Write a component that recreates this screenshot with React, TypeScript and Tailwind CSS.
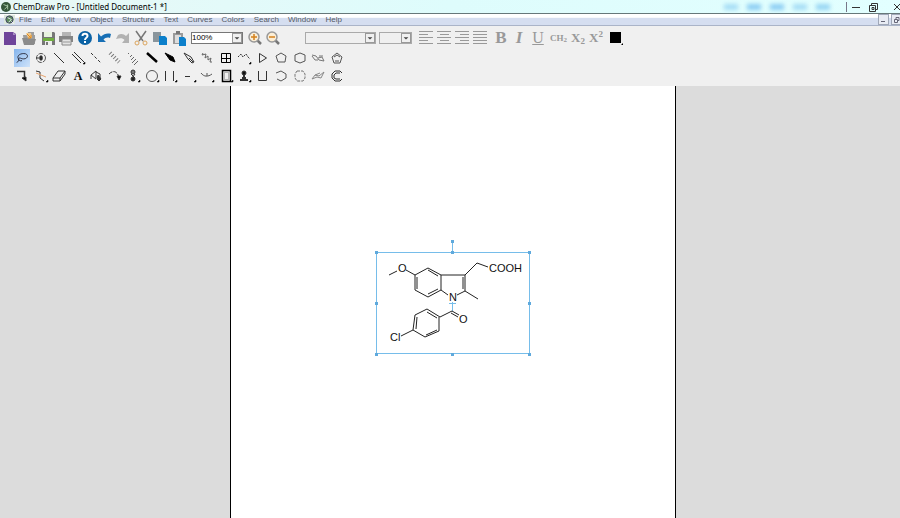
import React from 'react'

const menus = ['File', 'Edit', 'View', 'Object', 'Structure', 'Text', 'Curves', 'Colors', 'Search', 'Window', 'Help']

// main toolbar, drawn on a 16x16 grid
const actions = [
  { name: 'New', icon: <><path d="M2 2h9l3 2v11H2z" fill="#6f449a" /><path d="M11 2v3h3" fill="#a98cc4" /></> },
  { name: 'Open', icon: <><path d="M2 5h4l1-3h6v3h1v9H3z" fill="#9d9d9d" /><path d="M5 3h5l1 5H7z" fill="#f3c98b" /><path d="M6 4l4 4M10 5v3H7" stroke="#e08a1e" fill="none" /><path d="M1 8h5l1 1h8l-2 6H3z" fill="#8b8b8b" /></> },
  { name: 'Save', icon: <><path d="M2 2h12l1 1v12H2z" fill="#777" /><path d="M4 2h8v5H4z" fill="#e8f2df" /><path d="M3 8h11v3H3z" fill="#6fae3f" /><path d="M5 11h7v4H5z" fill="#eee" /><path d="M6 12h2v3H6z" fill="#777" /></> },
  { name: 'Print', icon: <><path d="M4 2h9v4H4z" fill="#b5b5b5" /><path d="M1 6h14v6H1z" fill="#858585" /><path d="M4 9h9v6H4z" fill="#e4e4e4" stroke="#888" /><path d="M5 12h7" stroke="#999" /></> },
  { name: 'Help', icon: <><circle cx="8" cy="8" r="7" fill="#0b62a5" /><path d="M5.500 6c0-3 5-3 5 0 0 2-2.500 1.500-2.500 4M8 11v2" stroke="#fff" strokeWidth="2" fill="none" /></> },
  { name: 'Undo', icon: <path d="M2 3v9h8L7.500 9.500C9 8 11 7 14 8l1-4C11 3 8 4 5 6.500z" fill="#176fb5" /> },
  { name: 'Redo', icon: <path d="M14 3v10H7l2.500-3C8 8 5 8 1 9l2-4c3-2 6-1 8 1z" fill="#b2b2b2" /> },
  { name: 'Cut', icon: <><path d="M3 1l7 10M13 1L6 11" stroke="#777" strokeWidth="1.500" /><circle cx="4" cy="13" r="2" stroke="#dba45c" fill="none" /><circle cx="12" cy="13" r="2" stroke="#dba45c" fill="none" /></> },
  { name: 'Copy', icon: <><path d="M1 2h8v10H1z" fill="#8a959c" /><path d="M7 6h6l2 2v7H7z" fill="#0c80cb" /></> },
  { name: 'Paste', icon: <><path d="M2 3h10v11H2z" fill="#9a9a9a" /><path d="M4 5h6v8H4z" fill="#ddd" /><path d="M5 1h4v3H5z" fill="#777" /><path d="M8 7h5l2 2v7H8z" fill="#0c80cb" /></> },
]

const corner = <path d="M14 15h2v-2z" fill="#000" stroke="#000" strokeWidth=".5" />

// drawing tools, 18x18 grid, 18 to a row
const tools = [
  { name: 'Lasso', icon: <path d="M3 14c2-1 3-2 2-4-2-3 1-6 6-6 6 0 5 6 0 6-3 0-3-1-5-1-2 1 0 4 3 3" stroke="#223" /> },
  { name: 'Structure Perspective', icon: <><circle cx="9" cy="9" r="4.500" stroke="#555" strokeDasharray="5 1" /><path d="M4 9h7" /><path d="M8 7h2v4H8z" fill="#222" /></> },
  { name: 'Solid Bond', icon: <path d="M4 4l10 10" /> },
  { name: 'Multiple Bonds', icon: <><path d="M3 5l9 9M5 3l10 10" />{corner}</> },
  { name: 'Dashed Bond', icon: <path d="M4 4l10 10" strokeDasharray="3 2" /> },
  { name: 'Hashed Bond', icon: <path d="M4 4l9 9" strokeWidth="4" strokeDasharray="1 2" stroke="#777" /> },
  { name: 'Hashed Wedged Bond', icon: <path d="M5 4L4 5M8 6L6 8M10 8l-3 3M12 10l-4 4M14 12l-4 4" stroke="#666" /> },
  { name: 'Bold Bond', icon: <path d="M4 4l10 9" strokeWidth="2.500" stroke="#000" /> },
  { name: 'Bold Wedged Bond', icon: <path d="M4 4l8 4 2 5-5-2z" fill="#000" stroke="#000" /> },
  { name: 'Hollow Wedged Bond', icon: <path d="M4 4l7 4 3 5-2 1-4-4zM9 9l4 4" /> },
  { name: 'Wavy Bond', icon: <path d="M5 4l-1 2 4-1-1 4 3-2v4l3-2-1 4h2" stroke="#666" /> },
  { name: 'Table', icon: <path d="M4.500 4.500h9v9h-9zM9.500 5v8M5 9.500h8" stroke="#000" /> },
  { name: 'Acyclic Chain', icon: <><path d="M3 8l3-3 2 3 3-3 2 3 2 2" strokeDasharray="2 1" />{corner}</> },
  { name: 'Cyclopropane Ring', icon: <path d="M5.500 4.500l7 4.500-7 4.500z" /> },
  { name: 'Cyclopentane Ring', icon: <path d="M4 7l5-3 5 3-1 6H6z" stroke="#555" /> },
  { name: 'Cyclohexane Ring', icon: <path d="M4 6l5-2 5 2v6l-5 2-5-2z" stroke="#555" /> },
  { name: 'Chair Ring', icon: <path d="M3 6l4 1 3 4 5 1-2-4-4 1M3 7l3 4h3M10 7h4" stroke="#777" /> },
  { name: 'Cyclopentadiene Ring', icon: <path d="M4 8l5-4 5 4-2 6H6zM6 8l3-2 3 2M7 12h4" stroke="#555" /> },
  { name: 'Marquee', icon: <><path d="M4 4.500h7.500V11" strokeWidth="1.500" /><path d="M9 11l4 3v-4z" fill="#000" /></> },
  { name: 'Bond Fragment', icon: <><path d="M4 4l4 1v6l4 3" /><path d="M4 6l10 4" stroke="#e7a46f" />{corner}</> },
  { name: 'Eraser', icon: <path d="M3 11l5-7h7l-5 7zM3 11v3h7v-3M10 14l5-7V4" /> },
  { name: 'Text', icon: <text x="9" y="13" textAnchor="middle" className="font-['Liberation_Serif'] text-[12px] font-bold" fill="#111" stroke="none">A</text> },
  { name: 'Pen', icon: <><path d="M4 12V8l5-4v7M4 8l5 4M9 5l4 2v5" /><path d="M11 8l3 4-2 2-2-2z" fill="#333" /></> },
  { name: 'Arrows', icon: <><path d="M3 7c4-4 8-3 10 3" strokeDasharray="4 1" /><path d="M11 9h4l-2 4z" fill="#000" /></> },
  { name: 'Orbitals', icon: <><circle cx="9" cy="5" r="2" fill="#777" /><circle cx="9" cy="12" r="2" fill="#222" /><path d="M7 7l4 4M11 7l-3 4" />{corner}</> },
  { name: 'Drawing Elements', icon: <><circle cx="9" cy="9" r="5.500" stroke="#555" />{corner}</> },
  { name: 'Brackets', icon: <><path d="M4.500 4v10M12.500 4v10" />{corner}</> },
  { name: 'Chemical Symbols', icon: <><path d="M5 9.500h5" />{corner}</> },
  { name: 'Query Tools', icon: <><path d="M3 6c3 4 7 4 11 1M9 6v3" stroke="#555" />{corner}</> },
  { name: 'TLC Plate', icon: <><path d="M5.500 3.500h8v11h-8z" stroke="#000" strokeWidth="1.500" /><path d="M7.500 5.500h4v7h-4z" stroke="#777" strokeDasharray="1 1" />{corner}</> },
  { name: 'Templates', icon: <><path d="M5 13h8M7 11h4M9 6v5" strokeWidth="2" /><circle cx="9" cy="6" r="2" fill="#111" />{corner}</> },
  { name: 'Cyclobutane Ring', icon: <path d="M4.500 4v9.500h8V4" /> },
  { name: 'Cyclohexane Ring 2', icon: <path d="M4 6l5-2 5 3v4l-5 3-4-2" stroke="#555" /> },
  { name: 'Cycloheptane Ring', icon: <path d="M6 4h6l2 3v4l-2 3H6l-2-3V7z" strokeDasharray="3 1" stroke="#777" /> },
  { name: 'Chair Ring 2', icon: <path d="M3 12l3-4 4 1 5-4-3 6-4-1zM6 8l5-2" stroke="#888" /> },
  { name: 'Benzene Ring', icon: <path d="M14 6l-2-2H7L4 7v4l3 3h5l2-2M12 6H8L6 8v3l2 1h4" /> },
]

const aligns = [
  { name: 'Align left', d: 'M0 .5h14M0 3.500h9M0 6.500h14M0 9.500h9M0 12.500h14' },
  { name: 'Center', d: 'M0 .5h14M3 3.500h9M0 6.500h14M3 9.500h9M0 12.500h14' },
  { name: 'Align right', d: 'M0 .5h14M5 3.500h9M0 6.500h14M5 9.500h9M0 12.500h14' },
  { name: 'Justify', d: 'M0 .5h14M0 3.500h14M0 6.500h14M0 9.500h14M0 12.500h14' },
]

const handles = [[376, 253], [452, 253], [529, 253], [376, 304], [529, 304], [376, 355], [452, 355], [529, 355], [452, 242]]

function Combo({ label, value, className }: { label: string; value?: string; className: string }) {
  return (
    <div className={'grid h-3 items-center border ' + className}>
      <select aria-label={label} className="col-start-1 row-start-1 h-full w-full appearance-none font-['Liberation_Sans'] text-[8px] leading-[10px] text-black">
        <option>{value}</option>
      </select>
      <svg viewBox="0 0 10 10" className="pointer-events-none col-start-1 row-start-1 size-[10px] justify-self-end border border-[#999] bg-[#f0f0f0]">
        <path d="M2 4h6L5 7z" fill="#444" />
      </svg>
    </div>
  )
}

function Zoom({ label, plus }: { label: string; plus?: boolean }) {
  return (
    <button aria-label={label} className="size-4">
      <svg viewBox="0 0 16 16" fill="none">
        <path d="M10 10l4 4" stroke="#777" strokeWidth="2.500" />
        <circle cx="7" cy="7" r="5" fill="#fbeed6" stroke="#999" strokeWidth="1.500" />
        <path d={plus ? 'M4 7h6M7 4v6' : 'M4 7h6'} stroke="#d4811c" strokeWidth="1.500" />
      </svg>
    </button>
  )
}

function TitleBar() {
  return (
    <header className="flex h-[14px] items-center border-b border-[#66787a] bg-linear-to-r from-[#e8f8f6] via-[#defcfc] to-[#e2ffff] pl-px">
      <svg viewBox="0 0 12 12" className="mr-[2px] size-[10px]">
        <circle cx="6" cy="6" r="6" fill="#35583a" />
        <path d="M3 3l5 2-4 4M8 3v6" stroke="#b9dcb8" fill="none" />
      </svg>
      <h1 className="font-['Noto_Sans',sans-serif] text-[8px] leading-3 whitespace-pre text-black">ChemDraw Pro - [Untitled Document-1 *]</h1>
      <div className="mr-4 ml-auto flex gap-[9px] blur-[2px]">
        <i className="h-[6px] w-[14px] bg-[#a5ddf5]" />
        <i className="h-[6px] w-[14px] bg-[#8bcdf3]" />
        <i className="h-[6px] w-[14px] bg-[#8bcdf3]" />
        <i className="h-[6px] w-[14px] bg-[#a5ddf5]" />
        <i className="h-[6px] w-[14px] bg-[#96d5f3]" />
      </div>
      <div className="flex items-center border-l border-[#778] pl-[5px]">
        <button aria-label="Minimize" className="h-[10px] w-2"><svg viewBox="0 0 8 10"><path d="M0 5.500h8" stroke="#333" /></svg></button>
        <button aria-label="Restore" className="ml-2 h-[10px] w-[10px]"><svg viewBox="0 0 10 10" fill="none" stroke="#333"><path d="M1.500 3.500h6v6h-6zM3.500 3V1.500h6v6H8M4 5.500h2v2H4z" /></svg></button>
        <button aria-label="Close" className="ml-4 h-[10px] w-[6px]"><svg viewBox="0 0 6 10" fill="none" stroke="#333"><path d="M0 2l6 6M6 2L0 8" /></svg></button>
      </div>
    </header>
  )
}

function Molecule() {
  return (
    <svg viewBox="372 236 162 122" className="mt-[150px] h-[122px] w-[162px]" fill="none" stroke="#222" role="img" aria-label="Indomethacin">
      <g stroke="#76bdea">
        <path d="M376.500 252.500h153v101h-153zM452.500 242v11M452.500 302v9M449 303.500h7" />
        {handles.map(([x, y]) => <rect key={x + '-' + y} x={x - 1} y={y - 2} width="3" height="3" fill="#5fa9dc" stroke="none" />)}
      </g>
      <path d="M389 275l8-4M406 270l9 5 13-7 13 7v15l-13 7-13-7v-15M441 275h24l12-12 11 4M465 275v16l-8 4M465 291l13 8M448 295l-7-5" />
      <path d="M417 277v12M428 270l10 6M428 294l10-5M463 277v12" />
      <path d="M452 311l-12 6-13-8-12 6-2 15 12 7 14-6v-14M452 311l7 4M451 313l7 4M413 330l-12 6" />
      <path d="M427 312l10 6M417 317l-1 12M426 335l11-5" />
      <g className="font-['Liberation_Sans'] text-[11px]" fill="#111" stroke="none">
        <text x="398" y="272">O</text>
        <text x="489" y="272">COOH</text>
        <text x="449" y="301">N</text>
        <text x="459" y="323">O</text>
        <text x="390" y="341">Cl</text>
      </g>
    </svg>
  )
}

export default function App() {
  return (
    <div className="flex min-h-screen flex-col bg-[#f0f0f0] font-['Liberation_Sans',sans-serif]">
      <TitleBar />
      <nav className="flex h-3 items-center border-b border-[#aab4c8] bg-linear-to-b from-white from-30% to-[#d5def0] to-40% pl-1">
        <svg viewBox="0 0 12 12" className="mr-[4px] size-[11px]">
          <path d="M0 1h12v10H0z" fill="#dce8dc" />
          <circle cx="6" cy="6" r="4" fill="#5b8a5b" stroke="#446" />
          <path d="M4 4l4 2-3 3M8 8l3 3" stroke="#eef" fill="none" />
        </svg>
        <div className="flex gap-[9px]">
          {menus.map((m) => <button key={m} className="text-[8px] leading-3 text-[#555b66]">{m}</button>)}
        </div>
        <div className="ml-auto flex gap-[2px]">
          <button aria-label="Minimize document" className="h-[11px] w-[11px] border border-[#a0a8b8] bg-[#e8ecf4]"><svg viewBox="0 0 9 9"><path d="M2 6.500h4" stroke="#667" /></svg></button>
          <button aria-label="Restore document" className="h-[11px] w-[9px] border-y border-l border-[#a0a8b8] bg-[#e8ecf4]"><svg viewBox="0 0 8 9" fill="none"><path d="M2.500 4.500h3v3h-3zM4 4V2.500h3v3H6" stroke="#667" /></svg></button>
        </div>
      </nav>

      <div role="toolbar" aria-label="Main" className="flex h-[23px] items-center pl-px">
        <div className="grid w-[187px] grid-cols-10 justify-items-center">
          {actions.map((a) => (
            <button key={a.name} aria-label={a.name} className="size-4"><svg viewBox="0 0 16 16">{a.icon}</svg></button>
          ))}
        </div>
        <Combo label="Zoom level" value="100%" className="ml-[3px] w-[52px] border-[#777] bg-white" />
        <div className="ml-1 flex gap-[2px]">
          <Zoom label="Zoom in" plus />
          <Zoom label="Zoom out" />
        </div>
        <Combo label="Font" className="ml-6 w-[71px] border-[#aaa]" />
        <Combo label="Font size" className="ml-[3px] w-[33px] border-[#aaa]" />
        <div className="ml-[7px] flex gap-1">
          {aligns.map((a) => (
            <button key={a.name} aria-label={a.name} className="h-[13px] w-[14px]"><svg viewBox="0 0 14 13"><path d={a.d} stroke="#999" /></svg></button>
          ))}
        </div>
        <div className="ml-[5px] flex items-center font-['Liberation_Serif',serif] text-[#999]">
          <button className="w-[18px] text-[17px] leading-4 font-bold">B</button>
          <button className="w-[18px] text-[17px] leading-4 font-bold italic">I</button>
          <button className="w-[20px] text-[16px] leading-4 underline">U</button>
          <button className="w-[21px] text-[9px] leading-4 font-bold">CH<sub className="text-[7px]">2</sub></button>
          <button className="w-[18px] text-[13px] leading-4 font-bold">X<sub className="text-[9px]">2</sub></button>
          <button className="w-[18px] text-[13px] leading-4 font-bold">X<sup className="text-[9px]">2</sup></button>
        </div>
        <button aria-label="Color" className="ml-[5px] h-[14px] w-[13px]"><svg viewBox="0 0 13 14"><path d="M0 1h11v11H0zM11 14h2v-2z" /></svg></button>
      </div>

      <div role="toolbar" aria-label="Tools" className="mb-px ml-[13px] grid w-[333px] grid-cols-18 justify-items-center">
        {tools.map((t, i) => (
          <button key={t.name} aria-label={t.name} className={i === 0 ? 'h-[18px] w-4 bg-linear-to-br from-[#84b4ec] to-[#cfe3fa]' : 'h-[18px] w-[18px]'}>
            <svg viewBox="0 0 18 18" fill="none" stroke="#333" className="size-full">{t.icon}</svg>
          </button>
        ))}
      </div>

      <main className="grid flex-1 grid-cols-[230fr_446px_224fr] bg-[#dcdcdc]">
        <section className="col-start-2 flex items-start justify-center border-x border-black bg-white">
          <Molecule />
        </section>
      </main>
    </div>
  )
}
